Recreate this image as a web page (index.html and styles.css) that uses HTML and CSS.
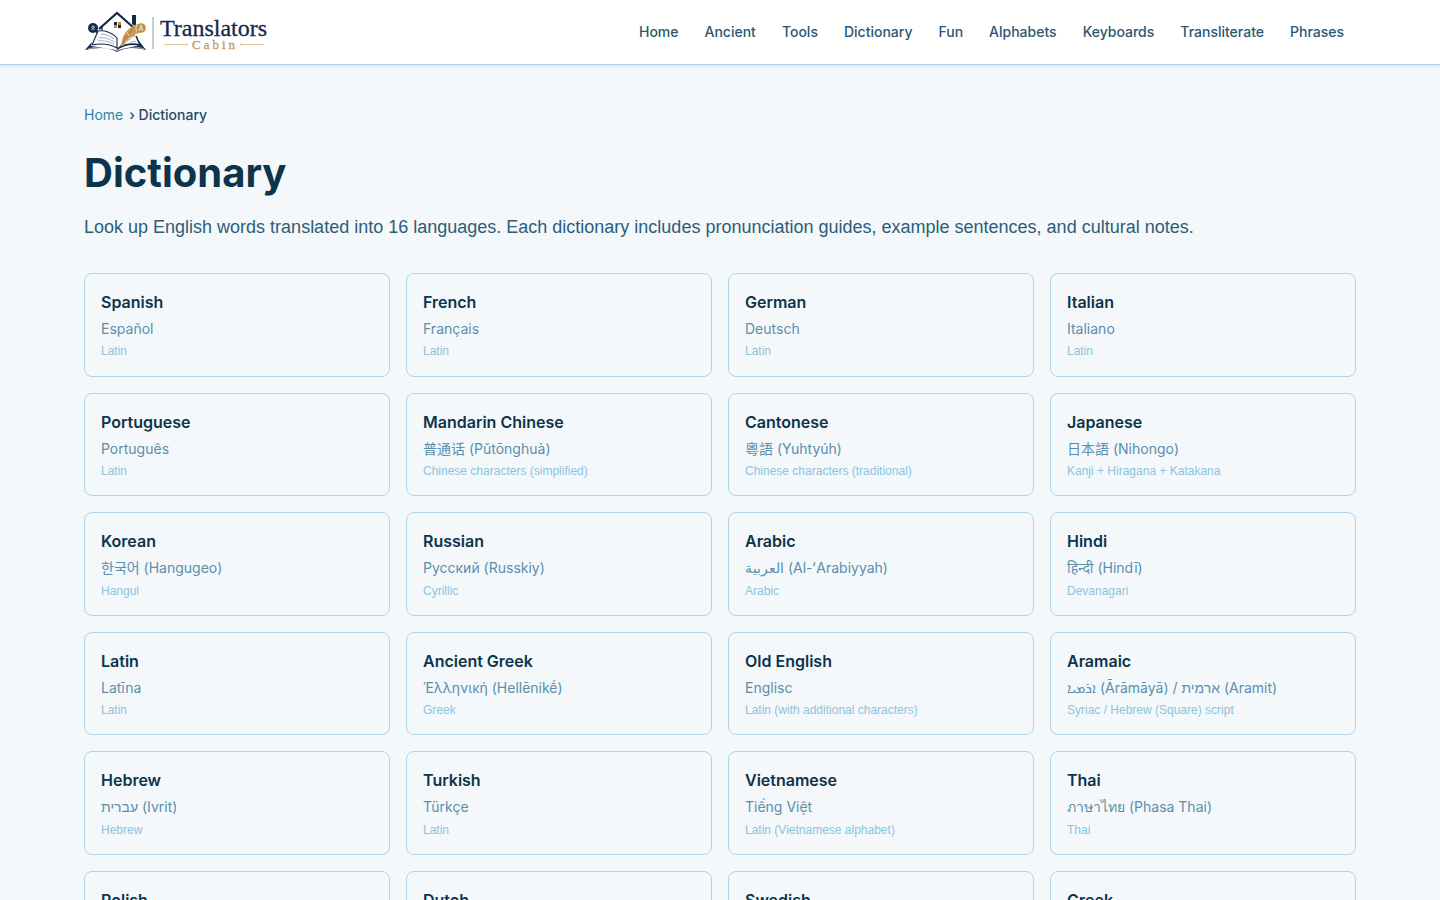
FILE: index.html
```
<!DOCTYPE html>
<html lang="en">
<head>
  <meta charset="UTF-8">
  <meta name="viewport" content="width=device-width, initial-scale=1.0">
  <title>Dictionary | Translators Cabin</title>
  <link rel="stylesheet" href="styles.css">
</head>
<body>
  <header class="site-header">
    <div class="container header-inner">
      <a class="logo" href="/" aria-label="Translators Cabin">
        <svg viewBox="0 0 188 44" width="188" height="44">
          <!-- open book -->
          <path d="M8 32L1 40C14 37 25 37 33 42C41 37 52 37 62 40L55 31L56 35L33 40L7 36Z" fill="#14284b"/>
          <path d="M14 21C21 20 29 23 33 28C37 23 43 20 50 20L56 35C47 33 39 35 33 39C26 35 18 33 8 36Z" fill="#fff"/>
          <path d="M8 35L14 21C21 20 29 23 33 28V38C26 34 18 33 8 35" fill="none" stroke="#14284b" stroke-width="1.1"/>
          <path d="M52 26L56 35C47 33 39 35 33 39" fill="none" stroke="#14284b" stroke-width="1.6"/>
          <path d="M17 24C21 24 26 26 30 29M15 28C20 27 26 29 30 32M14 31C20 30 26 32 30 34M46 33C48 31 50 31 52 32" fill="none" stroke="#9aa4b4" stroke-width="0.9"/>
          <path d="M4 39C14 36 25 36 33 41C41 36 52 36 60 39" fill="none" stroke="#fff" stroke-width="0.6"/>
          <!-- house -->
          <path d="M15 19L33 3L50 18" fill="none" stroke="#14284b" stroke-width="2.2"/>
          <path d="M48 5H52V17L48 14Z" fill="#14284b"/>
          <path d="M18 17V20" stroke="#14284b" stroke-width="1.4"/>
          <path d="M30 12H33V15H30ZM34 15H37V18H34Z" fill="#14284b"/>
          <path d="M34 12H37V15H34ZM30 15H33V18H30Z" fill="#b98a43"/>
          <!-- quill -->
          <path d="M38 35C37 26 43 18 53 14C55 21 51 28 43 31L39 36Z" fill="#c79b55"/>
          <path d="M35 38C40 30 45 23 51 17" fill="none" stroke="#8f6a2e" stroke-width="0.8"/>
          <path d="M44 29L49 27M43 23L45 25" fill="none" stroke="#fff" stroke-width="0.8"/>
          <!-- speech bubbles -->
          <path d="M10 21L14 24L13 18Z" fill="#14284b"/>
          <circle cx="9" cy="18" r="5" fill="#14284b"/>
          <path d="M7 17H11M9 15V17M7 20L11 17M8 18L11 20" fill="none" stroke="#fff" stroke-width="0.6"/>
          <circle cx="57" cy="18" r="5.500" fill="#fff"/>
          <path d="M53 20L52 24L57 22Z" fill="#bd914b"/>
          <circle cx="57" cy="18" r="4.800" fill="#bd914b"/>
          <path d="M55 21L57 15L59 21M56 19H58" fill="none" stroke="#fff" stroke-width="0.7"/>
          <!-- wordmark -->
          <path d="M69 7V39" stroke="#8c97a8" stroke-width="1"/>
          <text x="76" y="26" class="logo-name">Translators</text>
          <path d="M80 34.500H103M157 34.500H180" stroke="#dcc49b" stroke-width="1"/>
          <circle cx="103" cy="34.500" r="1" fill="#dcc49b"/>
          <circle cx="157" cy="34.500" r="1" fill="#dcc49b"/>
          <text x="108" y="39" class="logo-sub">Cabin</text>
        </svg>
      </a>
      <nav class="main-nav" aria-label="Main">
        <a href="/">Home</a>
        <a href="/ancient">Ancient</a>
        <a href="/tools">Tools</a>
        <a href="/dictionary">Dictionary</a>
        <a href="/fun">Fun</a>
        <a href="/alphabets">Alphabets</a>
        <a href="/keyboards">Keyboards</a>
        <a href="/transliterate">Transliterate</a>
        <a href="/phrases">Phrases</a>
      </nav>
    </div>
  </header>

  <main class="container">
    <nav class="breadcrumb" aria-label="Breadcrumb">
      <a href="/">Home</a>
      <span>› Dictionary</span>
    </nav>
    <h1>Dictionary</h1>
    <p class="intro">Look up English words translated into 16 languages. Each dictionary includes pronunciation guides, example sentences, and cultural notes.</p>

    <div class="grid">
      <a class="card" href="/dictionary/spanish">
        <h2>Spanish</h2>
        <p class="native">Español</p>
        <p class="script">Latin</p>
      </a>
      <a class="card" href="/dictionary/french">
        <h2>French</h2>
        <p class="native">Français</p>
        <p class="script">Latin</p>
      </a>
      <a class="card" href="/dictionary/german">
        <h2>German</h2>
        <p class="native">Deutsch</p>
        <p class="script">Latin</p>
      </a>
      <a class="card" href="/dictionary/italian">
        <h2>Italian</h2>
        <p class="native">Italiano</p>
        <p class="script">Latin</p>
      </a>
      <a class="card" href="/dictionary/portuguese">
        <h2>Portuguese</h2>
        <p class="native">Português</p>
        <p class="script">Latin</p>
      </a>
      <a class="card" href="/dictionary/mandarin">
        <h2>Mandarin Chinese</h2>
        <p class="native">普通话 (Pǔtōnghuà)</p>
        <p class="script">Chinese characters (simplified)</p>
      </a>
      <a class="card" href="/dictionary/cantonese">
        <h2>Cantonese</h2>
        <p class="native">粵語 (Yuhtyúh)</p>
        <p class="script">Chinese characters (traditional)</p>
      </a>
      <a class="card" href="/dictionary/japanese">
        <h2>Japanese</h2>
        <p class="native">日本語 (Nihongo)</p>
        <p class="script">Kanji + Hiragana + Katakana</p>
      </a>
      <a class="card" href="/dictionary/korean">
        <h2>Korean</h2>
        <p class="native">한국어 (Hangugeo)</p>
        <p class="script">Hangul</p>
      </a>
      <a class="card" href="/dictionary/russian">
        <h2>Russian</h2>
        <p class="native">Русский (Russkiy)</p>
        <p class="script">Cyrillic</p>
      </a>
      <a class="card" href="/dictionary/arabic">
        <h2>Arabic</h2>
        <p class="native">العربية (Al-ʻArabiyyah)</p>
        <p class="script">Arabic</p>
      </a>
      <a class="card" href="/dictionary/hindi">
        <h2>Hindi</h2>
        <p class="native">हिन्दी (Hindī)</p>
        <p class="script">Devanagari</p>
      </a>
      <a class="card" href="/dictionary/latin">
        <h2>Latin</h2>
        <p class="native">Latīna</p>
        <p class="script">Latin</p>
      </a>
      <a class="card" href="/dictionary/ancient-greek">
        <h2>Ancient Greek</h2>
        <p class="native">Ἑλληνική (Hellēnikḗ)</p>
        <p class="script">Greek</p>
      </a>
      <a class="card" href="/dictionary/old-english">
        <h2>Old English</h2>
        <p class="native">Englisc</p>
        <p class="script">Latin (with additional characters)</p>
      </a>
      <a class="card" href="/dictionary/aramaic">
        <h2>Aramaic</h2>
        <p class="native">ܐܪܡܝܐ (Ārāmāyā) / ארמית (Aramit)</p>
        <p class="script">Syriac / Hebrew (Square) script</p>
      </a>
      <a class="card" href="/dictionary/hebrew">
        <h2>Hebrew</h2>
        <p class="native">עברית (Ivrit)</p>
        <p class="script">Hebrew</p>
      </a>
      <a class="card" href="/dictionary/turkish">
        <h2>Turkish</h2>
        <p class="native">Türkçe</p>
        <p class="script">Latin</p>
      </a>
      <a class="card" href="/dictionary/vietnamese">
        <h2>Vietnamese</h2>
        <p class="native">Tiếng Việt</p>
        <p class="script">Latin (Vietnamese alphabet)</p>
      </a>
      <a class="card" href="/dictionary/thai">
        <h2>Thai</h2>
        <p class="native">ภาษาไทย (Phasa Thai)</p>
        <p class="script">Thai</p>
      </a>
      <a class="card" href="/dictionary/polish">
        <h2>Polish</h2>
        <p class="native">Polski</p>
        <p class="script">Latin</p>
      </a>
      <a class="card" href="/dictionary/dutch">
        <h2>Dutch</h2>
        <p class="native">Nederlands</p>
        <p class="script">Latin</p>
      </a>
      <a class="card" href="/dictionary/swedish">
        <h2>Swedish</h2>
        <p class="native">Svenska</p>
        <p class="script">Latin</p>
      </a>
      <a class="card" href="/dictionary/greek">
        <h2>Greek</h2>
        <p class="native">Ελληνικά</p>
        <p class="script">Greek</p>
      </a>
    </div>
  </main>
</body>
</html>
```
FILE: styles.css
```
* {
  margin: 0;
  padding: 0;
  box-sizing: border-box;
}

body {
  font-family: Inter, "Noto Sans", "Noto Sans CJK SC", sans-serif;
  line-height: 1.6;
  background: #f4f8fb;
  color: #0c344b;
}

a {
  text-decoration: none;
}

.container {
  max-width: 1320px;
  margin: 0 auto;
  padding: 0 24px;
}

.site-header {
  background: #fff;
  border-bottom: 1px solid #aed6ea;
  box-shadow: 0 1px 3px rgba(12, 52, 75, 0.12);
}

.header-inner {
  display: flex;
  align-items: center;
  justify-content: space-between;
  min-height: 64px;
}

.logo svg {
  display: block;
}

.logo-name {
  font-family: "Liberation Serif", serif;
  font-size: 24px;
  fill: #14284b;
  stroke: #14284b;
  stroke-width: 0.3;
}

.logo-sub {
  font-family: "Liberation Serif", serif;
  font-size: 13px;
  letter-spacing: 3px;
  fill: #c39a58;
  stroke: #c39a58;
  stroke-width: 0.3;
}

.main-nav {
  display: flex;
  flex-wrap: wrap;
  gap: 26px;
  padding-right: 12px;
}

.main-nav a {
  font-size: 14px;
  font-weight: 500;
  color: #2d5670;
}

main {
  padding-bottom: 48px;
}

.breadcrumb {
  display: flex;
  gap: 6px;
  margin-top: 39px;
  font-size: 14px;
  line-height: 22px;
}

.breadcrumb a {
  color: #2b83ab;
}

.breadcrumb span {
  font-weight: 500;
  color: #1f4c66;
}

h1 {
  margin-top: 23px;
  font-size: 40px;
  font-weight: 700;
  line-height: 48px;
}

.intro {
  margin-top: 16px;
  font-family: "Liberation Sans", Arial, sans-serif;
  font-size: 18px;
  line-height: 28px;
  color: #2d5d78;
}

.grid {
  display: grid;
  grid-template-columns: repeat(4, 1fr);
  gap: 16px;
  margin-top: 32px;
}

.card {
  padding: 16px 16px 14px;
  border: 1px solid #aed6ea;
  border-radius: 8px;
}

.card:hover {
  border-color: #2b83ab;
}

.card h2 {
  margin-bottom: 4px;
  font-size: 16px;
  font-weight: 600;
  line-height: 24px;
  color: #0c344b;
}

.native {
  font-size: 14px;
  color: #5a8fac;
}

.script {
  margin-top: 2px;
  font-family: "Liberation Sans", Arial, sans-serif;
  font-size: 12px;
  color: #8ac4df;
}

@media (max-width: 1000px) {
  .grid {
    grid-template-columns: repeat(2, 1fr);
  }
}

@media (max-width: 560px) {
  .grid {
    grid-template-columns: 1fr;
  }
}
```
